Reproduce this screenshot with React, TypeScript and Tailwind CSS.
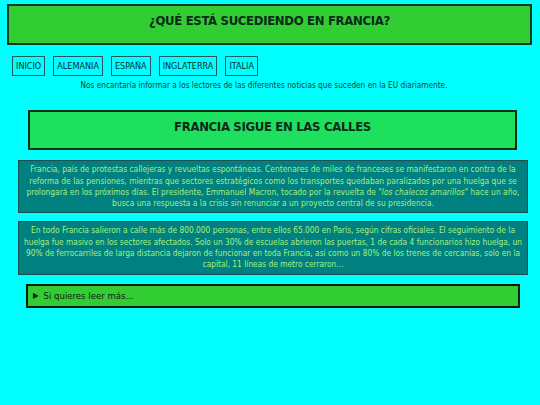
const font = { fontFamily: '"DejaVu Sans Condensed", "DejaVu Sans", sans-serif' };

const navItems = ["INICIO", "ALEMANIA", "ESPAÑA", "INGLATERRA", "ITALIA"];

export default function App() {
  return (
    <div className="min-h-[405px] w-full bg-[#00ffff] pt-[4px] text-[#0b2a1a]" style={font}>
      {/* top banner */}
      <header className="ml-[7px] mr-[8px] flex h-[41px] items-start justify-center border-2 border-[#0f3d22] bg-[#32cd32] pt-[5px]">
        <h1 className="text-[13px] font-bold tracking-tight">¿QUÉ ESTÁ SUCEDIENDO EN FRANCIA?</h1>
      </header>

      <nav className="mt-[11px] flex gap-[8px] px-[12px]">
        {navItems.map((item) => (
          <a
            key={item}
            className="flex h-[20px] items-center border border-[#1d5a5a] px-[3px] text-[9px] leading-none text-[#0d2c2c]"
          >
            {item}
          </a>
        ))}
      </nav>
      <p className="mt-[3px] pr-[12px] text-center text-[8.2px] text-[#123a3a]">
        Nos encantaría informar a los lectores de las diferentes noticias que suceden en la EU diariamente.
      </p>

      <section className="ml-[28px] mr-[23px] mt-[19px] flex h-[40px] items-start justify-center border-2 border-[#0b2a14] bg-[#1ee05f] pt-[5px]">
        <h2 className="text-[13px] font-bold tracking-tight">FRANCIA SIGUE EN LAS CALLES</h2>
      </section>

      <div className="ml-[18px] mr-[12px] mt-[10px] border border-[#1b4c4c] bg-[#008080] px-[3px] py-[3px] text-center text-[8.4px] leading-[11.3px] text-[#a6f27c]">
        Francia, país de protestas callejeras y revueltas espontáneas. Centenares de miles de franceses se manifestaron en
        contra de la reforma de las pensiones, mientras que sectores estratégicos como los transportes quedaban
        paralizados por una huelga que se prolongará en los próximos días. El presidente, Emmanuel Macron, tocado por la
        revuelta de <i>"los chalecos amarillos"</i> hace un año, busca una respuesta a la crisis sin renunciar a un
        proyecto central de su presidencia.
      </div>

      <div className="ml-[18px] mr-[12px] mt-[8px] border border-[#1b4c4c] bg-[#008080] px-[1px] py-[3px] text-center text-[8.3px] leading-[11.3px] text-[#a6f27c]">
        En todo Francia salieron a calle más de 800.000 personas, entre ellos 65.000 en París, según cifras oficiales. El
        seguimiento de la huelga fue masivo en los sectores afectados. Solo un 30% de escuelas abrieron las puertas, 1 de
        cada 4 funcionarios hizo huelga, un 90% de ferrocarriles de larga distancia dejaron de funcionar en toda Francia,
        así como un 80% de los trenes de cercanías, solo en la capital, 11 líneas de metro cerraron...
      </div>

      <details className="ml-[26px] mr-[20px] mt-[9px] border-2 border-[#0b1a0b] bg-[#32cd32]">
        <summary className="flex h-[20px] cursor-pointer items-center gap-[5px] px-[5px] text-[9.5px] text-[#102010]">
          <span className="text-[8px]">▶</span>
          Si quieres leer más...
        </summary>
      </details>
    </div>
  );
}
